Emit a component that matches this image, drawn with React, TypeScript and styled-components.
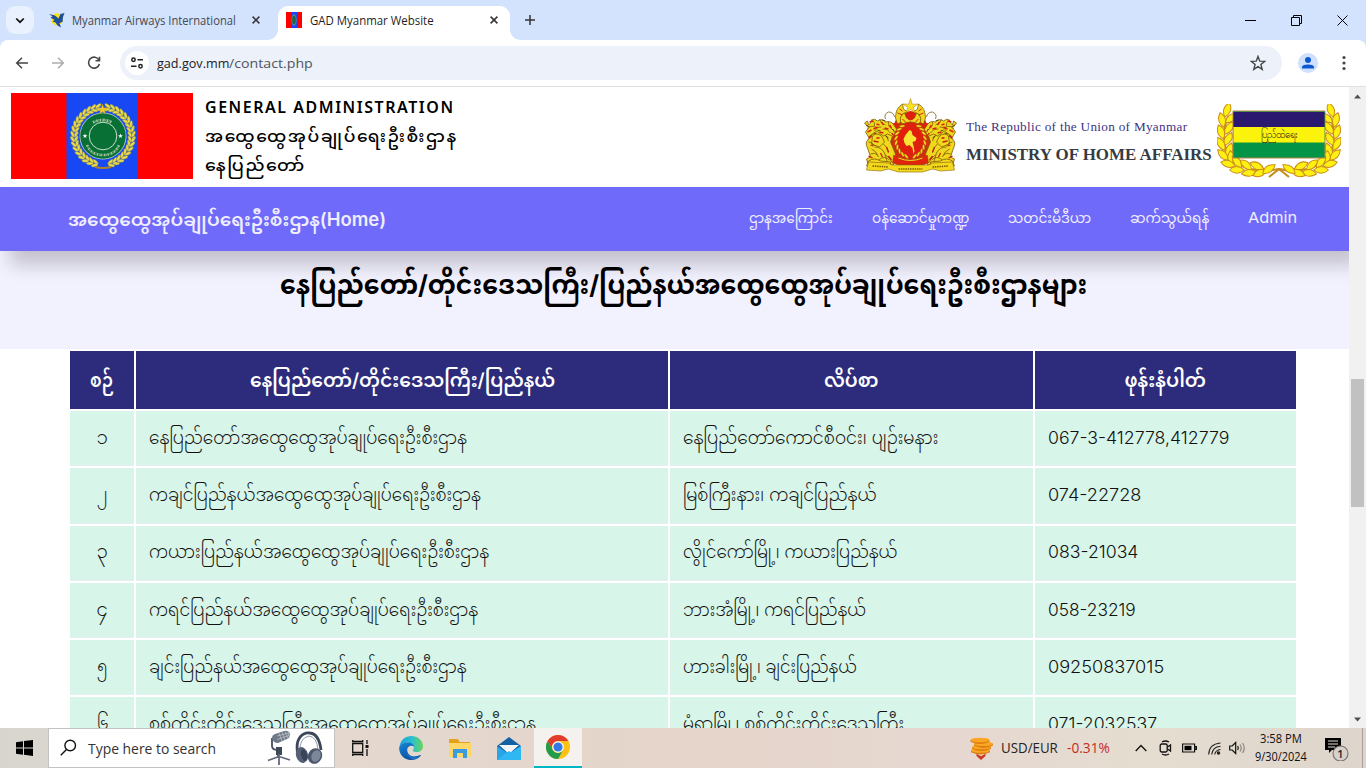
import React, { useLayoutEffect, useRef, useState } from "react";
import styled, { createGlobalStyle } from "styled-components";

const ui = `"Open Sans", "Noto Sans", sans-serif`;
const mm = `Inter, "Noto Sans Myanmar", "Noto Sans", sans-serif`;

const Global = createGlobalStyle`
  * { box-sizing: border-box; }
  body { margin: 0; overflow: hidden; font-family: ${mm}; }
  svg { display: block; flex: none; }
`;

/* ---------- text that fills a fixed measure ---------- */
const Measure = styled.span<{ $w: number; $size: number; $weight?: number; $color?: string; $font?: string; $dy?: number; $track?: number }>`
  display: block;
  flex: none;
  width: ${(p) => p.$w}px;
  height: ${(p) => Math.round(p.$size * 1.4)}px;
  line-height: ${(p) => Math.round(p.$size * 1.4)}px;
  font-family: ${(p) => p.$font || mm};
  font-size: ${(p) => p.$size}px;
  font-weight: ${(p) => p.$weight || 400};
  letter-spacing: ${(p) => p.$track || 0}px;
  color: ${(p) => p.$color || "inherit"};
  white-space: nowrap;
  margin-top: ${(p) => p.$dy || 0}px;
`;
const Stretch = styled.span`
  display: inline-block;
  transform-origin: 0 50%;
`;
type FitProps = { w: number; size: number; weight?: number; color?: string; font?: string; dy?: number; track?: number; children: string };
function Fit({ w, size, weight, color, font, dy, track, children }: FitProps) {
  const ref = useRef<HTMLSpanElement>(null);
  const [scale, setScale] = useState(1);
  useLayoutEffect(() => {
    if (ref.current && ref.current.offsetWidth) setScale(w / (ref.current.offsetWidth - (track || 0)));
  }, [w, children, track]);
  return (
    <Measure $w={w} $size={size} $weight={weight} $color={color} $font={font} $dy={dy} $track={track}>
      <Stretch ref={ref} style={{ transform: `scaleX(${scale})` }}>{children}</Stretch>
    </Measure>
  );
}

/* ---------- window ---------- */
const Screen = styled.div`
  width: 1366px;
  height: 768px;
  display: flex;
  flex-direction: column;
  overflow: hidden;
  background: #fff;
`;
const TabStrip = styled.div`
  height: 40px;
  flex: none;
  display: flex;
  align-items: center;
  background: #d3e3fd;
  padding-left: 6px;
`;
const TabSearch = styled.div`
  width: 28px;
  height: 28px;
  border-radius: 9px;
  background: #e9f0fe;
  display: grid;
  place-items: center;
`;
const Tab = styled.div<{ $active?: boolean }>`
  position: relative;
  height: 34px;
  align-self: flex-end;
  display: flex;
  align-items: center;
  padding-bottom: 6px;
  width: ${(p) => (p.$active ? 232 : 234)}px;
  margin-left: ${(p) => (p.$active ? 0 : 10)}px;
  padding-left: ${(p) => (p.$active ? 8 : 5)}px;
  gap: ${(p) => (p.$active ? 8 : 7)}px;
  background: ${(p) => (p.$active ? "#fff" : "transparent")};
  border-radius: 10px 10px 0 0;
  ${(p) => p.$active && `
    &::before, &::after { content: ""; position: absolute; bottom: 0; width: 10px; height: 10px; }
    &::before { left: -10px; background: radial-gradient(circle at 0 0, transparent 9.5px, #fff 10px); }
    &::after { right: -10px; background: radial-gradient(circle at 100% 0, transparent 9.5px, #fff 10px); }
  `}
`;
const Push = styled.div<{ $r?: number }>`
  margin-left: auto;
  margin-right: ${(p) => p.$r || 0}px;
  display: flex;
  align-items: center;
`;
const NewTab = styled.div`
  margin-left: 14px;
`;
const WindowButtons = styled.div`
  margin-left: auto;
  display: flex;
  gap: 35px;
  padding-right: 18px;
  align-items: center;
`;
const CornerFill = styled.div`
  background: #d3e3fd;
  flex: none;
`;
const Toolbar = styled.div`
  height: 47px;
  display: flex;
  align-items: center;
  background: #fff;
  border-radius: 8px 8px 0 0;
  border-bottom: 1px solid #dfe1e4;
  padding-left: 14px;
`;
const NavButtons = styled.div`
  display: flex;
  gap: 20px;
`;
const Omnibox = styled.div`
  margin-left: 18px;
  width: 1162px;
  height: 34px;
  border-radius: 17px;
  background: #ecf1fa;
  display: flex;
  align-items: center;
  padding-left: 5px;
`;
const SiteInfo = styled.div`
  width: 24px;
  height: 24px;
  border-radius: 50%;
  background: #fff;
  display: grid;
  place-items: center;
  margin-right: 8px;
`;
const Profile = styled.div`
  margin: 0 0 0 16px;
  width: 20px;
  height: 20px;
  border-radius: 50%;
  background: #cfe0fc;
  overflow: hidden;
`;
const MenuDots = styled.div`
  margin-left: 23px;
`;

/* ---------- page ---------- */
const Viewport = styled.div`
  flex: 1;
  min-height: 0;
  display: flex;
`;
const Page = styled.div`
  width: 1349px;
  height: 641px;
  overflow: hidden;
  flex: none;
`;
const Banner = styled.header`
  height: 100px;
  display: flex;
  padding: 6px 8px 0 11px;
  background: #fff;
`;
const DeptNames = styled.div`
  margin-left: 12px;
  display: flex;
  flex-direction: column;
  padding-top: 2px;
  color: #000;
`;
const CrestBox = styled.div`
  margin-left: auto;
  padding-top: 5px;
`;
const MinistryNames = styled.div`
  margin: 23px 4px 0 9px;
  width: 247px;
`;
const MinistryBadge = styled.div`
  padding-top: 11px;
`;
const MenuBar = styled.nav`
  position: relative;
  height: 64px;
  background: #6f6afa;
  display: flex;
  padding: 0 52px 0 68px;
  box-shadow: 10px 14px 18px rgba(0, 0, 0, 0.2);
  align-items: center;
  color: #efeeff;
`;
const MenuList = styled.div`
  margin-left: auto;
  display: flex;
  gap: 39px;
  padding-bottom: 3px;
`;
const Hero = styled.section`
  height: 98px;
  background: #f2f1fe;
  padding: 16px 0 0 280px;
`;
const HeroTitle = styled.div`
  position: relative;
`;
const Table = styled.section`
  width: 1226px;
  margin: 2px 0 0 70px;
`;
const Row = styled.div<{ $head?: boolean }>`
  display: grid;
  grid-template-columns: 64px 532px 363px 261px;
  column-gap: 2px;
  height: ${(p) => (p.$head ? 58 : 55.3)}px;
  margin-bottom: 2px;
`;
const HeadCell = styled.div`
  background: #2d2b7b;
  color: #fff;
  display: flex;
  align-items: center;
  justify-content: center;
`;
const Cell = styled.div<{ $center?: boolean }>`
  background: #d8f5e9;
  border-bottom: 1px solid #e6efef;
  color: #111;
  display: flex;
  align-items: center;
  padding: 0 0 2px ${(p) => (p.$center ? 0 : 13)}px;
  justify-content: ${(p) => (p.$center ? "center" : "flex-start")};
`;
const Scrollbar = styled.div`
  width: 17px;
  background: #f1f1f1;
  display: flex;
  flex-direction: column;
  align-items: center;
  padding: 7px 0 6px;
`;
const Thumb = styled.div`
  width: 13px;
  height: 128px;
  margin: 280px 0 auto;
  background: #c1c1c1;
`;

/* ---------- taskbar ---------- */
const Taskbar = styled.footer`
  height: 40px;
  flex: none;
  display: flex;
  align-items: center;
  background: linear-gradient(90deg, #d8d5cf 0, #e4d8cf 25%, #e5d5ca 50%, #e6d7d0 68%, #e5ddd0 85%, #ddd4cb 100%);
  padding-left: 16px;
`;
const SearchBox = styled.div`
  width: 287px;
  height: 40px;
  margin-left: 15px;
  border: 1px solid #c3c2c1;
  background: #fff;
  display: flex;
  align-items: center;
  padding-left: 11px;
`;
const Apps = styled.div`
  display: flex;
  align-items: center;
  margin-left: 17px;
`;
const AppSlot = styled.div<{ $w: number; $active?: boolean }>`
  width: ${(p) => p.$w}px;
  height: 40px;
  display: grid;
  place-items: center;
  background: ${(p) => (p.$active ? "#f5f1ee" : "transparent")};
  border-bottom: ${(p) => (p.$active ? "2px solid #00b7c3" : "0")};
`;
const Tray = styled.div`
  margin-left: auto;
  width: 397px;
  height: 40px;
  display: flex;
  align-items: center;
`;
const Gap = styled.div<{ $w: number }>`
  width: ${(p) => p.$w}px;
  flex: none;
`;
const Clock = styled.div`
  width: 52px;
  display: flex;
  flex-direction: column;
  align-items: center;
  color: #111;
`;
const ShowDesktop = styled.div`
  width: 1px;
  height: 40px;
  background: #aaa39d;
  margin-left: auto;
  margin-right: 3px;
`;

/* ---------- drawings ---------- */
const CloseX = ({ c = "#333", s = 8 }: { c?: string; s?: number }) => (
  <svg width={s} height={s} viewBox="0 0 8 8"><path d="M.6.6l6.8 6.8M7.4.6L.6 7.4" stroke={c} strokeWidth="1.5" /></svg>
);

const star = (cx: number, cy: number, r: number, inner = 0.4) =>
  Array.from({ length: 10 }, (_, i) => {
    const a = (i * Math.PI) / 5 - Math.PI / 2;
    const q = i % 2 ? r * inner : r;
    return `${(cx + q * Math.cos(a)).toFixed(2)},${(cy + q * Math.sin(a)).toFixed(2)}`;
  }).join(" ");

function DeptFlag() {
  const leaves = [];
  for (let i = 0; i < 17; i++) {
    const a = 106 + i * 9.7;
    for (const side of [1, -1]) {
      for (const r of [27, 30.5]) {
        const t = ((side > 0 ? a : 180 - a) * Math.PI) / 180;
        const x = 92 + r * Math.cos(t);
        const y = 43 + r * Math.sin(t);
        const deg = (t * 180) / Math.PI + side * (r > 30 ? 62 : 118);
        leaves.push(<ellipse key={`${i}${side}${r}`} cx={x} cy={y} rx="3.4" ry="1.5" fill="#ecd94a" stroke="#6f7f52" strokeWidth=".45" transform={`rotate(${deg} ${x} ${y})`} />);
      }
    }
  }
  return (
    <svg width="182" height="86" viewBox="0 0 182 86">
      <path fill="#fe0000" d="M0 0h182v86H0z" />
      <path fill="#1848f4" d="M55.5 0h71v86h-71z" />
      {leaves}
      <path d="M84 74q8 2 16 0" stroke="#a88330" strokeWidth="2" fill="none" />
      <circle cx="92" cy="43" r="23.500" fill="#b9cdbb" />
      <circle cx="92" cy="43" r="22.700" fill="#087035" />
      <circle cx="92" cy="43" r="13.800" fill="#087035" stroke="#dcebdc" strokeWidth=".9" />
      <path d="M82 29.500q10-5 19 0" fill="none" stroke="#a5c29b" strokeWidth="2.800" strokeDasharray="1.600 .7 .6 .6" />
      <path d="M76 52q4 10 16 10t16-10" fill="none" stroke="#a5c29b" strokeWidth="2.600" strokeDasharray="1.600 .7 .6 .6" />
      <polygon points={star(74, 43, 2.6)} fill="#fff" />
      <polygon points={star(109.500, 43, 2.600)} fill="#fff" />
      <polygon points={star(91.500, 16.500, 5.500)} fill="#f5c92b" stroke="#a38324" strokeWidth=".4" />
    </svg>
  );
}

function Lion() {
  return (
    <g fill="#f0d81e" stroke="#7d5a0a" strokeWidth=".8">
      <path d="M3 50q-3-5 1-9l3-2q0-7 6-9 6-1 9 3l6 5-2 6 5 12-2 11H4l-2-6 4-2z" />
      <path d="M8 38q4-4 9 0l3 6-5 5-8-3zM10 49q7 0 10 6l3 10M7 51q5 2 7 8M18 35q5 2 6 8M14 62q6-5 11 0M4 44q4 0 6 4M6 56q4-2 7 1M19 46q4 3 5 9M21 57q4 2 7 8" fill="none" />
      <path d="M4 63q6-4 12 0l10 1v4H2z" />
      <path d="M12 40h3M9 43l5 1M22 49l2 5M4 58l4 2M16 55l2 4M24 58l3 4M6 47l3 1" stroke="#c8210a" strokeWidth="1.300" />
      <path d="M0 25l3-2 1 4q2-1 3-5 3-2 6 1 5-3 8 1 6-2 9 4l4 6-4 5-7-3-4 2-7-5-8 6-3-5 3-4z" />
      <path d="M7 22q4 2 3 6M15 21q1 5 6 6M24 24q-1 5 5 8M4 29q5-2 9 1M10 33q3-5 7-4M18 31q5-1 8 4M21 21q-2-5 3-7 5 0 6 5" fill="none" />
      <path d="M5 24l4-1M12 26l3 1M20 30l4 1M3 34l4-2M9 31l4-2M17 24l2 3M25 27l2 3M15 34l4 1M27 35l3 3" stroke="#d7270c" strokeWidth="1.400" />
      <path d="M2 27l3 2M18 22l3 1M13 32l3 1M28 31l2 3M9 36l3-1M21 38l3 2" stroke="#4b3507" strokeWidth=".9" />
    </g>
  );
}

function Crest() {
  const leaves = [];
  for (let i = 0; i < 9; i++) {
    for (const s of [1, -1]) {
      const t = ((s > 0 ? -55 + i * 16 : 235 - i * 16) * Math.PI) / 180;
      const x = 46 + 14.5 * Math.cos(t);
      const y = 42 + 17 * Math.sin(t);
      leaves.push(<ellipse key={`${i}${s}`} cx={x} cy={y} rx="2.800" ry="1.100" fill="#f6dd1c" stroke="#8a6508" strokeWidth=".35" transform={`rotate(${(t * 180) / Math.PI + s * 60} ${x} ${y})`} />);
    }
  }
  return (
    <svg width="93" height="75" viewBox="0 0 92 75">
      <path d="M3 30l27-5q3-11 16-12 13 1 16 12l27 5-3 34H6z" fill="#e0200f" />
      <g fill="#f0d81e" stroke="#7d5a0a" strokeWidth=".75">
        <path d="M31 20q0-10 7-14l1 5 4 3-5 2q-3 4-1 8l-4 2zM61 20q0-10-7-14l-1 5-4 3 5 2q3 4 1 8l4 2z" />
        <path d="M36 24q-1-7 4-9l2 5 4 2 4-2 2-5q5 2 4 9l-4 3-6-3-6 3z" />
        <path d="M33 15l5 2M59 15l-5 2M38 21l3 3M54 21l-3 3M35 11l3 2M57 11l-3 2" stroke="#d7270c" strokeWidth="1" />
      </g>
      <circle cx="46" cy="19" r="3.200" fill="#e0200f" />
      <Lion />
      <g transform="translate(92 0) scale(-1 1)"><Lion /></g>
      <ellipse cx="46" cy="43" rx="17.500" ry="19" fill="#e0200f" stroke="#8c6209" strokeWidth=".8" />
      {leaves}
      <path d="M45 32l2 1 1 4 4 3-1 3-3 1 1 4 1 5-1 3-1-6-3-3-3 1-2-3-1-4 2-4z" fill="#f8e432" />
      <path d="M29 57q17 12 34 0l1 8q-18 8-36 0z" fill="#df250e" stroke="#8c6209" strokeWidth=".5" />
      <path d="M34 60q12 5 24 0" stroke="#f6dd1c" fill="none" strokeWidth="1" />
      <path d="M4 64l20 1q3 3 8 2h28q5 1 8-2l20-1 2 8-14 1-8-2-10 3H34l-10-3-8 2-14-1z" fill="#f3d91b" stroke="#8c6209" strokeWidth=".6" />
      <path d="M8 68l16 1M34 71h24M68 69l16-1" stroke="#806008" strokeWidth="1.600" strokeDasharray="1.500 .8" />
      <polygon points={star(46, 8.5, 8, 0.36)} fill="#f8e31e" stroke="#a87b0d" strokeWidth=".5" />
    </svg>
  );
}

function HomeAffairsBadge() {
  const branch = (key: string) => {
    const pts: [number, number, number][] = [
      [10, 6, 108], [14, 14, 140], [5, 16, 75], [12, 24, 125], [4, 28, 70], [11, 35, 120], [4, 40, 60], [12, 46, 110], [6, 51, 45], [14, 54, 85],
      [11, 60, 15], [20, 58, 50], [20, 66, 0], [29, 61, 40], [32, 69, -8], [40, 62, 25], [43, 69, -22], [52, 65, -35],
    ];
    return (
      <g key={key}>
        <path d="M11 12C3 35 6 58 34 65q14 3 28 0l10 8" stroke="#c58a17" strokeWidth="2" fill="none" />
        {pts.map(([x, y, r], i) => (
          <path key={i} d="M-7.500 0Q-1-7 7.500 0 0 6.500-7.500 0z" transform={`translate(${x} ${y}) rotate(${r})`} fill="#fff013" stroke="#cb8d18" strokeWidth="1" />
        ))}
      </g>
    );
  };
  return (
    <svg width="124" height="76" viewBox="0 0 124 76">
      {branch("l")}
      <g transform="translate(124 0) scale(-1 1)">{branch("r")}</g>
      <path d="M16 7h92v47H16z" fill="#049447" stroke="#b58545" strokeWidth="1" />
      <path d="M16.500 8h91v15h-91z" fill="#2b186f" />
      <path d="M16.500 23h91v15.500h-91z" fill="#fbf30b" />
      <text x="62" y="34" textAnchor="middle" fontFamily="Inter, sans-serif" fontSize="10" fontWeight="500" textLength="37" lengthAdjust="spacingAndGlyphs" fill="#222">ပြည်ထဲရေး</text>
    </svg>
  );
}

const MaiIcon = () => (
  <svg width="16" height="16" viewBox="0 0 16 16">
    <circle cx="8" cy="7.300" r="6" fill="#f8e31b" />
    <path d="M0 2l6 1.500 3.500 3 2-4.500 4-1-1.500 4-.5 5-3 1 1.500 4.500-3.500-2-2-3-3-1 2-1.500-4-2.500 2-1z" fill="#1d4f9c" />
  </svg>
);
const GadIcon = () => (
  <svg width="16" height="16" viewBox="0 0 16 16">
    <path fill="#fe0000" d="M0 0h16v16H0z" /><path fill="#1848f4" d="M5 0h6v16H5z" />
    <ellipse cx="8" cy="8" rx="2.600" ry="5.800" fill="#66858a" /><ellipse cx="8" cy="8" rx="1.800" ry="4.200" fill="#126b45" />
  </svg>
);
const Microphone = () => (
  <svg width="24" height="36" viewBox="0 0 24 36">
    <path d="M5 8v8q0 4 6 4v8" stroke="#454f60" strokeWidth="1.800" fill="none" />
    <path d="M5 8q0-3 3-4l9-3q5-1 6 3 0 4-3 5l-9 4q-5 0-6-5z" fill="#6f7887" />
    <path d="M12 3l3 8M15 2l3 8M18 1.500l3 7M21 1.500l1.500 6M10 6l12-3M10 9.500l12-4" stroke="#c4c9d0" strokeWidth=".7" />
    <path d="M9 17h6v8H9z" fill="#3e4859" />
    <path d="M12 24v11M12 26.500L1 30.500M12 26.500l11 3.500" stroke="#606a7a" strokeWidth="1.800" />
  </svg>
);
const Headphones = () => (
  <svg width="28" height="34" viewBox="0 0 28 34">
    <path d="M3 24C-1 6 9 1 15 2q9 1 11 17" fill="none" stroke="#3c4759" strokeWidth="2.800" />
    <path d="M5 21Q4 7 14 5q8 1 9 14" fill="none" stroke="#8e99aa" strokeWidth="1" />
    <ellipse cx="7" cy="24" rx="6" ry="8" fill="#566177" transform="rotate(-15 7 24)" />
    <ellipse cx="20" cy="25" rx="7" ry="8" fill="#4c576d" transform="rotate(24 20 25)" />
    <ellipse cx="21" cy="25" rx="4.500" ry="6" fill="#7c879a" transform="rotate(24 21 25)" />
    <ellipse cx="9" cy="24" rx="3" ry="6" fill="#39445a" transform="rotate(-15 9 24)" />
  </svg>
);
const Edge = () => (
  <svg width="24" height="24" viewBox="0 0 24 24">
    <defs>
      <linearGradient id="edgeTop" x1="0" x2="1"><stop stopColor="#1ca1db" /><stop offset=".55" stopColor="#2fc0cc" /><stop offset="1" stopColor="#67d756" /></linearGradient>
      <linearGradient id="edgeLow" x1="0" y1="0" x2=".6" y2="1"><stop stopColor="#1685d4" /><stop offset="1" stopColor="#0b4c9c" /></linearGradient>
    </defs>
    <path d="M.4 11C1.500 3.800 6.500 0 12.300 0 19 0 24 4.800 24 10.300c0 3.500-2.800 5.800-6.200 5.800-3 0-4-1.100-4-1.700 0-.7 1.100-1.200 1.100-3.100 0-2.300-2.300-4.600-6-4.600C4 6.700 1.200 9 .4 11z" fill="url(#edgeTop)" />
    <path d="M.3 11C1.700 8 5 6.600 9 6.600c3.600 0 5.700 1.900 6 4.200-1-1-2.300-1.300-3.500-1-3.400.8-4 4-3 6.500 1.600 4 6.300 5.700 12.500 2.800.6-.3 1 .1.700.7C19.500 22.600 15.700 24 12 24 4.600 24-.6 17.500.3 11z" fill="url(#edgeLow)" />
    <path d="M10.500 10.200C6.500 12 6 19 11.500 22.500c3.500 1.700 8 .5 10-2.900-6 3-11.500 1.100-13-3.300-.9-2.600-.5-5 2-6.100z" fill="#1b6fc4" />
  </svg>
);
const Folder = () => (
  <svg width="22" height="19" viewBox="0 0 22 19">
    <path d="M0 1q0-1 1-1h7q1 0 1.500 1l1 2H21v4H0z" fill="#e3a21a" /><path d="M0 4h22v13q0 1-1 1H1q-1 0-1-1z" fill="#ffd766" />
    <path d="M4 10h14v9h-4v-5H8v5H4z" fill="#3b9be0" />
  </svg>
);
const Mail = () => (
  <svg width="24" height="23" viewBox="0 0 24 23">
    <path d="M0 9L12 0l12 9v13H0z" fill="#1460a5" /><path d="M2 8h20l-10 9z" fill="#f3f5f8" />
    <path d="M0 9l12 8 12-8v14H0z" fill="#28a5e8" /><path d="M0 23l12-9 2 1.600L24 9v14z" fill="#2fb7f4" />
  </svg>
);
const Chrome = () => (
  <svg width="24" height="24" viewBox="0 0 24 24">
    <circle cx="12" cy="12" r="12" fill="#fbc116" />
    <path d="M1.600 6A12 12 0 0 1 22.400 6H12a6 6 0 0 0-5.200 9z" fill="#e33b2e" />
    <path d="M1.600 6A12 12 0 0 0 12 24l5.200-9A6 6 0 0 1 6.800 15z" fill="#229b4c" />
    <circle cx="12" cy="12" r="5.800" fill="#fff" /><circle cx="12" cy="12" r="4.600" fill="#3479e6" />
  </svg>
);
const Coins = () => {
  const stack: [number, number][] = [[11.500, 14.500], [12.500, 11], [14.500, 7.800], [11, 4]];
  return (
    <svg width="24" height="24" viewBox="0 0 24 24">
      {stack.map(([x, y]) => (
        <g key={y}>
          <path d={`M${x - 9.500} ${y}v1.800q9.500 4.600 19 0v-1.800z`} fill="#dc7d0d" />
          <ellipse cx={x} cy={y} rx="9.500" ry="2.300" fill="#fba525" />
        </g>
      ))}
      <path d="M7.500 17.800l4.500 2.400 4.500-2.400v2.200L12 24l-4.500-4z" fill="#c9391e" />
    </svg>
  );
};

/* ---------- data ---------- */
const rows: [string, string, number, string, number, string, number][] = [
  ["၁", "နေပြည်တော်အထွေထွေအုပ်ချုပ်ရေးဦးစီးဌာန", 318, "နေပြည်တော်ကောင်စီဝင်း၊ ပျဉ်းမနား", 255, "067-3-412778,412779", 181],
  ["၂", "ကချင်ပြည်နယ်အထွေထွေအုပ်ချုပ်ရေးဦးစီးဌာန", 332, "မြစ်ကြီးနား၊ ကချင်ပြည်နယ်", 194, "074-22728", 93],
  ["၃", "ကယားပြည်နယ်အထွေထွေအုပ်ချုပ်ရေးဦးစီးဌာန", 340, "လွိုင်ကော်မြို့၊ ကယားပြည်နယ်", 215, "083-21034", 91],
  ["၄", "ကရင်ပြည်နယ်အထွေထွေအုပ်ချုပ်ရေးဦးစီးဌာန", 329, "ဘားအံမြို့၊ ကရင်ပြည်နယ်", 183, "058-23219", 88],
  ["၅", "ချင်းပြည်နယ်အထွေထွေအုပ်ချုပ်ရေးဦးစီးဌာန", 318, "ဟားခါးမြို့၊ ချင်းပြည်နယ်", 174, "09250837015", 116],
  ["၆", "စစ်ကိုင်းတိုင်းဒေသကြီးအထွေထွေအုပ်ချုပ်ရေးဦးစီးဌာန", 387, "မုံရွာမြို့၊ စစ်ကိုင်းတိုင်းဒေသကြီး", 221, "071-2032537", 109],
];
const heads: [string, number][] = [["စဉ်", 24], ["နေပြည်တော်/တိုင်းဒေသကြီး/ပြည်နယ်", 305], ["လိပ်စာ", 55], ["ဖုန်းနံပါတ်", 82]];
const menu: [string, number][] = [["ဌာနအကြောင်း", 84], ["ဝန်ဆောင်မှုကဏ္ဍ", 97], ["သတင်းမီဒီယာ", 83], ["ဆက်သွယ်ရန်", 79], ["Admin", 49]];

export default function App() {
  return (
    <Screen>
      <Global />
      <TabStrip>
        <TabSearch><svg width="10" height="7" viewBox="0 0 10 7"><path d="M1.200 1.500L5 5.200l3.800-3.700" fill="none" stroke="#111" strokeWidth="1.700" /></svg></TabSearch>
        <Tab>
          <MaiIcon />
          <Fit w={164} size={13} font={ui} color="#45494f">Myanmar Airways International</Fit>
          <Push $r={18}><CloseX /></Push>
        </Tab>
        <Tab $active>
          <GadIcon />
          <Fit w={124} size={13} font={ui} color="#1f1f1f">GAD Myanmar Website</Fit>
          <Push $r={12}><CloseX /></Push>
        </Tab>
        <NewTab><svg width="12" height="12" viewBox="0 0 12 12"><path d="M6 1v10M1 6h10" stroke="#333" strokeWidth="1.500" /></svg></NewTab>
        <WindowButtons>
          <svg width="11" height="11" viewBox="0 0 11 11"><path d="M0 5.500h11" stroke="#000" /></svg>
          <svg width="11" height="11" viewBox="0 0 11 11"><path d="M.5 2.500h8v8h-8zM2.500 2.500v-2h8v8h-2" fill="none" stroke="#000" /></svg>
          <svg width="11" height="11" viewBox="0 0 11 11"><path d="M.5.5l10 10M10.500.5l-10 10" stroke="#000" /></svg>
        </WindowButtons>
      </TabStrip>
      <CornerFill>
        <Toolbar>
          <NavButtons>
            <svg width="16" height="16" viewBox="0 0 16 16" fill="none" stroke="#444746" strokeWidth="1.500"><path d="M14 8H3M8 2.700L2.700 8 8 13.300" /></svg>
            <svg width="16" height="16" viewBox="0 0 16 16" fill="none" stroke="#adadad" strokeWidth="1.500"><path d="M2 8h11M8 2.700L13.300 8 8 13.300" /></svg>
            <svg width="16" height="16" viewBox="0 0 16 16" fill="none" stroke="#444746" strokeWidth="1.600"><path d="M13 5.200A5.500 5.500 0 1 0 13.400 9M13.500 1.800v4h-4" /></svg>
          </NavButtons>
          <Omnibox>
            <SiteInfo>
              <svg width="14" height="12" viewBox="0 0 14 12" fill="none" stroke="#222" strokeWidth="1.500"><circle cx="3.500" cy="2.800" r="1.700" /><path d="M7.500 2.800H13M1 9.200h5.500" /><circle cx="10.500" cy="9.200" r="1.700" /></svg>
            </SiteInfo>
            <Fit w={72} size={13.5} font={ui} color="#202124">gad.gov.mm</Fit>
            <Fit w={84} size={13.5} font={ui} color="#50555a">/contact.php</Fit>
            <Push $r={16}>
              <svg width="16" height="16" viewBox="0 0 16 16"><polygon points={star(8, 8.600, 7.200, 0.42)} fill="none" stroke="#444746" strokeWidth="1.400" /></svg>
            </Push>
          </Omnibox>
          <Profile><svg width="20" height="20" viewBox="0 0 20 20" fill="#0b57d0"><circle cx="10" cy="7" r="3" /><path d="M4 15.500v-1.200q0-2.800 6-2.800t6 2.800v1.200z" /></svg></Profile>
          <MenuDots><svg width="6" height="16" viewBox="0 0 6 16" fill="#444746"><circle cx="3" cy="2.500" r="1.600" /><circle cx="3" cy="8" r="1.600" /><circle cx="3" cy="13.500" r="1.600" /></svg></MenuDots>
        </Toolbar>
      </CornerFill>

      <Viewport>
        <Page>
          <Banner>
            <DeptFlag />
            <DeptNames>
              <Fit w={248} size={16.5} weight={600} font={`"Noto Sans", sans-serif`} track={1.6}>GENERAL ADMINISTRATION</Fit>
              <Fit w={251} size={17} weight={500} dy={6} track={1.6}>အထွေထွေအုပ်ချုပ်ရေးဦးစီးဌာန</Fit>
              <Fit w={99} size={16} weight={500} dy={6} track={1.4}>နေပြည်တော်</Fit>
            </DeptNames>
            <CrestBox><Crest /></CrestBox>
            <MinistryNames>
              <Gap $w={0} />
              <Fit w={221} size={13} font={`"Liberation Serif", serif`} color="#3d3382" dy={2} track={0.3}>The Republic of the Union of Myanmar</Fit>
              <Fit w={246} size={17} weight={700} font={`"Liberation Serif", serif`} color="#353b43" dy={7}>MINISTRY OF HOME AFFAIRS</Fit>
            </MinistryNames>
            <MinistryBadge><HomeAffairsBadge /></MinistryBadge>
          </Banner>
          <MenuBar>
            <Fit w={318} size={18.5} weight={600}>အထွေထွေအုပ်ချုပ်ရေးဦးစီးဌာန(Home)</Fit>
            <MenuList>
              {menu.map(([t, w]) => <Fit key={t} w={w} size={15}>{t}</Fit>)}
            </MenuList>
          </MenuBar>
          <Hero>
            <HeroTitle>
              <Fit w={807} size={26} weight={700} color="#000">နေပြည်တော်/တိုင်းဒေသကြီး/ပြည်နယ်အထွေထွေအုပ်ချုပ်ရေးဦးစီးဌာနများ</Fit>
            </HeroTitle>
          </Hero>
          <Table>
            <Row $head>
              {heads.map(([t, w]) => <HeadCell key={t}><Fit w={w} size={19} weight={600}>{t}</Fit></HeadCell>)}
            </Row>
            {rows.map(([n, a, aw, b, bw, c, cw]) => (
              <Row key={n}>
                <Cell $center><Fit w={11} size={18} weight={300}>{n}</Fit></Cell>
                <Cell><Fit w={aw} size={18} weight={300}>{a}</Fit></Cell>
                <Cell><Fit w={bw} size={18} weight={300}>{b}</Fit></Cell>
                <Cell><Fit w={cw} size={17.5} weight={300}>{c}</Fit></Cell>
              </Row>
            ))}
          </Table>
        </Page>
        <Scrollbar>
          <svg width="7" height="5" viewBox="0 0 7 5"><path d="M0 4.500h7L3.500.5z" fill="#505050" /></svg>
          <Thumb />
          <svg width="7" height="5" viewBox="0 0 7 5"><path d="M0 .5h7L3.500 4.500z" fill="#505050" /></svg>
        </Scrollbar>
      </Viewport>

      <Taskbar>
        <svg width="17" height="16" viewBox="0 0 17 16"><path d="M0 2.300l7-1v6.200H0zM8 1.100L17 0v7.500H8zM0 8.500h7v6.200l-7-1zM8 8.500h9V16l-9-1.200z" /></svg>
        <SearchBox>
          <svg width="17" height="18" viewBox="0 0 17 18" fill="none" stroke="#111" strokeWidth="1.400"><circle cx="10.200" cy="6.500" r="5.300" /><path d="M6.500 10.500L.8 16.300" /></svg>
          <Gap $w={11} />
          <Fit w={128} size={15} font={ui} color="#333">Type here to search</Fit>
          <Gap $w={51} />
          <Microphone />
          <Gap $w={4} />
          <Headphones />
        </SearchBox>
        <Apps>
          <svg width="17" height="16" viewBox="0 0 17 16" fill="none" stroke="#111" strokeWidth="1.300"><path d="M.7 3.500h10v9H.7zM.7 0v1.500h10V0M.7 16v-1.500h10V16M15 0v4M15 9v7" /><path d="M13.500 6.500h3" strokeWidth="3" /></svg>
          <Gap $w={18} />
          <AppSlot $w={48}><Edge /></AppSlot>
          <AppSlot $w={49}><Folder /></AppSlot>
          <AppSlot $w={50}><Mail /></AppSlot>
          <AppSlot $w={48} $active><Chrome /></AppSlot>
        </Apps>
        <Tray>
          <Coins />
          <Gap $w={8} />
          <Fit w={57} size={14} font={ui} color="#222">USD/EUR</Fit>
          <Gap $w={9} />
          <Fit w={43} size={14} font={ui} color="#c62b1c">-0.31%</Fit>
          <Gap $w={25} />
          <svg width="12" height="8" viewBox="0 0 12 8"><path d="M.7 7L6 1.500 11.300 7" fill="none" stroke="#111" strokeWidth="1.300" /></svg>
          <Gap $w={12} />
          <svg width="13" height="16" viewBox="0 0 13 16" fill="none" stroke="#111" strokeWidth="1.300"><rect x="1.200" y="4" width="7" height="8" rx="1.500" /><path d="M8.500 7l3-2v6l-3-2M3 2q3.500-2 7 0M3 14q3.500 2 7 0" /></svg>
          <Gap $w={10} />
          <svg width="15" height="10" viewBox="0 0 15 10"><path d="M.6 1h12v8H.6zM13 3.500h1.400v3H13z" fill="none" stroke="#111" strokeWidth="1.200" /><path d="M2.500 2.800h7v4.400h-7z" /></svg>
          <Gap $w={11} />
          <svg width="13" height="13" viewBox="0 0 13 13" fill="none" stroke="#222" strokeWidth="1.100"><path d="M.7 12.500Q1 2 12.500 1M3.700 12.500Q4.500 5 12.500 4.200M6.700 12.500q.8-4.500 5.800-5" /><circle cx="10.500" cy="11" r="1.200" fill="#222" /></svg>
          <Gap $w={8} />
          <svg width="17" height="14" viewBox="0 0 17 14" fill="none" stroke="#111" strokeWidth="1.200"><path d="M.7 5h2.500l3.500-3.500v11L3.200 9H.7zM8.700 5q1.200 2 0 4" /><path d="M11 3.500q2.500 3.500 0 7M13.500 2q3.500 5 0 10" stroke="#8b8580" /></svg>
          <Gap $w={9} />
          <Clock>
            <Fit w={42} size={12} font={ui} dy={-2}>3:58 PM</Fit>
            <Fit w={52} size={12} font={ui} dy={1}>9/30/2024</Fit>
          </Clock>
          <Gap $w={18} />
          <svg width="26" height="26" viewBox="0 0 26 26">
            <path d="M0 3h16v12H7l-3 3v-3H0z" /><path d="M3 6h10M3 9h10M3 12h7" stroke="#e5ddd3" strokeWidth="1.200" />
            <circle cx="15.500" cy="18.500" r="7.500" fill="#d6d1cc" stroke="#77736f" strokeWidth="1.100" />
            <text x="15.500" y="22.500" fontFamily="Open Sans, sans-serif" fontSize="11" fontWeight="600" textAnchor="middle" fill="#222">1</text>
          </svg>
          <ShowDesktop />
        </Tray>
      </Taskbar>
    </Screen>
  );
}
